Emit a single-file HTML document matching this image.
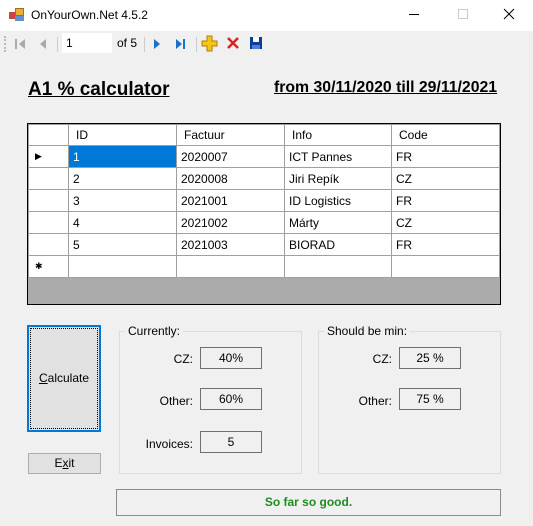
<!DOCTYPE html>
<html><head><style>
*{margin:0;padding:0;box-sizing:border-box}
body{width:533px;height:526px;background:#f0f0f0;font-family:"Liberation Sans",sans-serif;font-size:12px;color:#000;position:relative;overflow:hidden}
.a{position:absolute}
.title{left:0;top:0;width:533px;height:31px;background:#fff}
table{border-collapse:collapse;position:absolute;left:28px;top:124px;background:#fff}
td{border:1px solid #a0a0a0;height:22px;padding:0 4px;font-size:12px;white-space:nowrap}
.h td{height:21px;padding-left:7px}
.box{border:1px solid #707070;background:#f0f0f0;text-align:center;line-height:20px;height:22px;width:62px}
.grp{border:1px solid #dcdcdc}
.lbl{text-align:right}
</style></head><body>
<div class="a title"></div>
<div class="a" style="left:9px;top:8px;width:16px;height:14px">
<div class="a" style="left:0;top:4px;width:7px;height:7px;background:#c44"></div>
<div class="a" style="left:6px;top:0;width:9px;height:8px;background:#e8b030;border:1px solid #a07020"></div>
<div class="a" style="left:6px;top:8px;width:9px;height:5px;background:#6090d0"></div></div>
<div class="a" style="left:31px;top:8px;font-size:12px">OnYourOwn.Net 4.5.2</div>
<div class="a" style="left:409px;top:14px;width:10px;height:1px;background:#000"></div>
<div class="a" style="left:458px;top:9px;width:10px;height:10px;border:1px solid #ccc"></div>
<svg class="a" style="left:503px;top:8px" width="12" height="12"><path d="M1 1L11 11M11 1L1 11" stroke="#000" stroke-width="1"/></svg>
<!-- toolbar -->
<div class="a" style="left:4px;top:36px;width:1px;height:16px;border-left:2px dotted #bbb"></div>
<svg class="a" style="left:12px;top:36px" width="190" height="16">
<rect x="3" y="3" width="2" height="10" fill="#aaa"/><path d="M13 3 L7 8 L13 13Z" fill="#aaa"/>
<path d="M34 3 L28 8 L34 13Z" fill="#aaa"/>
<rect x="45" y="1" width="1" height="15" fill="#ccc"/>
<rect x="132" y="1" width="1" height="15" fill="#ccc"/>
<path d="M142 3 L148 8 L142 13Z" fill="#1a6fd0"/>
<path d="M164 3 L170 8 L164 13Z" fill="#1a6fd0"/><rect x="171" y="3" width="2" height="10" fill="#1a6fd0"/>
<rect x="184" y="1" width="1" height="15" fill="#ccc"/>
</svg>
<div class="a" style="left:62px;top:33px;width:50px;height:20px;background:#fff;padding:3px 4px">1</div>
<div class="a" style="left:117px;top:36px">of 5</div>
<svg class="a" style="left:201px;top:35px" width="70" height="18">
<path d="M6 1h5v5h5v5h-5v5h-5v-5h-5v-5h5z" fill="#f5c518" stroke="#b08000" stroke-width="1"/>
<path d="M27 3 L37 13 M37 3 L27 13" stroke="#e02020" stroke-width="2.5"/>
<rect x="49" y="2" width="12" height="12" fill="#0a3e9a"/><rect x="52" y="2" width="6" height="5" fill="#fff"/><rect x="51" y="10" width="8" height="4" fill="#4a80d0"/>
</svg>
<div class="a" style="left:28px;top:79px;font-size:19px;font-weight:bold;text-decoration:underline">A1 % calculator</div>
<div class="a" style="left:274px;top:79px;font-size:15.8px;font-weight:bold;text-decoration:underline">from 30/11/2020 till 29/11/2021</div>
<div class="a" style="left:27px;top:123px;width:474px;height:182px;border:1px solid #000;background:#ababab"></div>
<table>
<tr class="h"><td style="width:40px"></td><td style="width:108px">ID</td><td style="width:108px">Factuur</td><td style="width:107px">Info</td><td style="width:108px">Code</td></tr>
<tr><td style="font-size:9px;padding-left:6px">▶</td><td style="background:#0078d7;color:#fff">1</td><td>2020007</td><td>ICT Pannes</td><td>FR</td></tr>
<tr><td></td><td>2</td><td>2020008</td><td>Jiri Repík</td><td>CZ</td></tr>
<tr><td></td><td>3</td><td>2021001</td><td>ID Logistics</td><td>FR</td></tr>
<tr><td></td><td>4</td><td>2021002</td><td>Márty</td><td>CZ</td></tr>
<tr><td></td><td>5</td><td>2021003</td><td>BIORAD</td><td>FR</td></tr>
<tr><td style="font-size:9px;padding-left:6px">✱</td><td></td><td></td><td></td><td></td></tr>
</table>
<div class="a" style="left:27px;top:325px;width:74px;height:107px;border:2px solid #0078d7;background:#e1e1e1;padding:1px"><div style="border:1px dotted #000;height:100%;text-align:center;line-height:99px"><u>C</u>alculate</div></div>
<div class="a" style="left:28px;top:453px;width:73px;height:21px;border:1px solid #adadad;background:#e1e1e1;text-align:center;line-height:19px">E<u>x</u>it</div>
<div class="a grp" style="left:119px;top:331px;width:183px;height:143px"></div>
<div class="a" style="left:125px;top:324px;background:#f0f0f0;padding:0 3px">Currently:</div>
<div class="a lbl" style="left:130px;top:352px;width:63px">CZ:</div><div class="a box" style="left:200px;top:347px">40%</div>
<div class="a lbl" style="left:130px;top:394px;width:63px">Other:</div><div class="a box" style="left:200px;top:388px">60%</div>
<div class="a lbl" style="left:130px;top:437px;width:63px">Invoices:</div><div class="a box" style="left:200px;top:431px">5</div>
<div class="a grp" style="left:318px;top:331px;width:183px;height:143px"></div>
<div class="a" style="left:324px;top:324px;background:#f0f0f0;padding:0 3px">Should be min:</div>
<div class="a lbl" style="left:330px;top:352px;width:62px">CZ:</div><div class="a box" style="left:399px;top:347px">25 %</div>
<div class="a lbl" style="left:330px;top:394px;width:62px">Other:</div><div class="a box" style="left:399px;top:388px">75 %</div>
<div class="a" style="left:116px;top:489px;width:385px;height:27px;border:1px solid #8a8a8a;text-align:center;line-height:25px;color:#1e8c1e;font-weight:bold">So far so good.</div>
</body></html>
